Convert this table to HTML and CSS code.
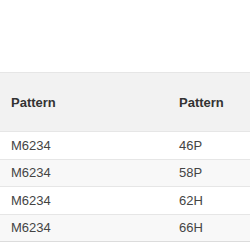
FILE: index.html
```html
<!DOCTYPE html>
<html>
<head>
<meta charset="utf-8">
<link rel="stylesheet" href="styles.css">
</head>
<body>
<div class="page">
  <table class="grid">
    <thead>
      <tr><th>Pattern</th><th>Pattern</th></tr>
    </thead>
    <tbody>
      <tr><td>M6234</td><td>46P</td></tr>
      <tr class="alt"><td>M6234</td><td>58P</td></tr>
      <tr><td>M6234</td><td>62H</td></tr>
      <tr class="alt"><td>M6234</td><td>66H</td></tr>
    </tbody>
  </table>
</div>
</body>
</html>
```
FILE: styles.css
```css
html, body {
  margin: 0;
  padding: 0;
  background: #fff;
  overflow: hidden;
}
.page {
  padding-top: 72px;
  width: 250px;
  overflow: hidden;
}
.grid {
  border-collapse: collapse;
  width: 336px;
  font-family: "Liberation Sans", Arial, sans-serif;
  font-size: 13px;
  line-height: 18px;
  color: #444;
  border-top: 1px solid #e3e3e3;
  border-bottom: 1px solid #dcdcdc;
}
.grid th, .grid td {
  width: 168px;
  text-align: left;
  padding: 4.5px 11px 4px;
  border-top: 1px solid #e6e6e6;
}
.grid th {
  background: #f2f2f2;
  color: #333;
  font-weight: bold;
  padding-top: 21px;
  padding-bottom: 19px;
}
.grid .alt td {
  background: #f8f8f8;
}
```
